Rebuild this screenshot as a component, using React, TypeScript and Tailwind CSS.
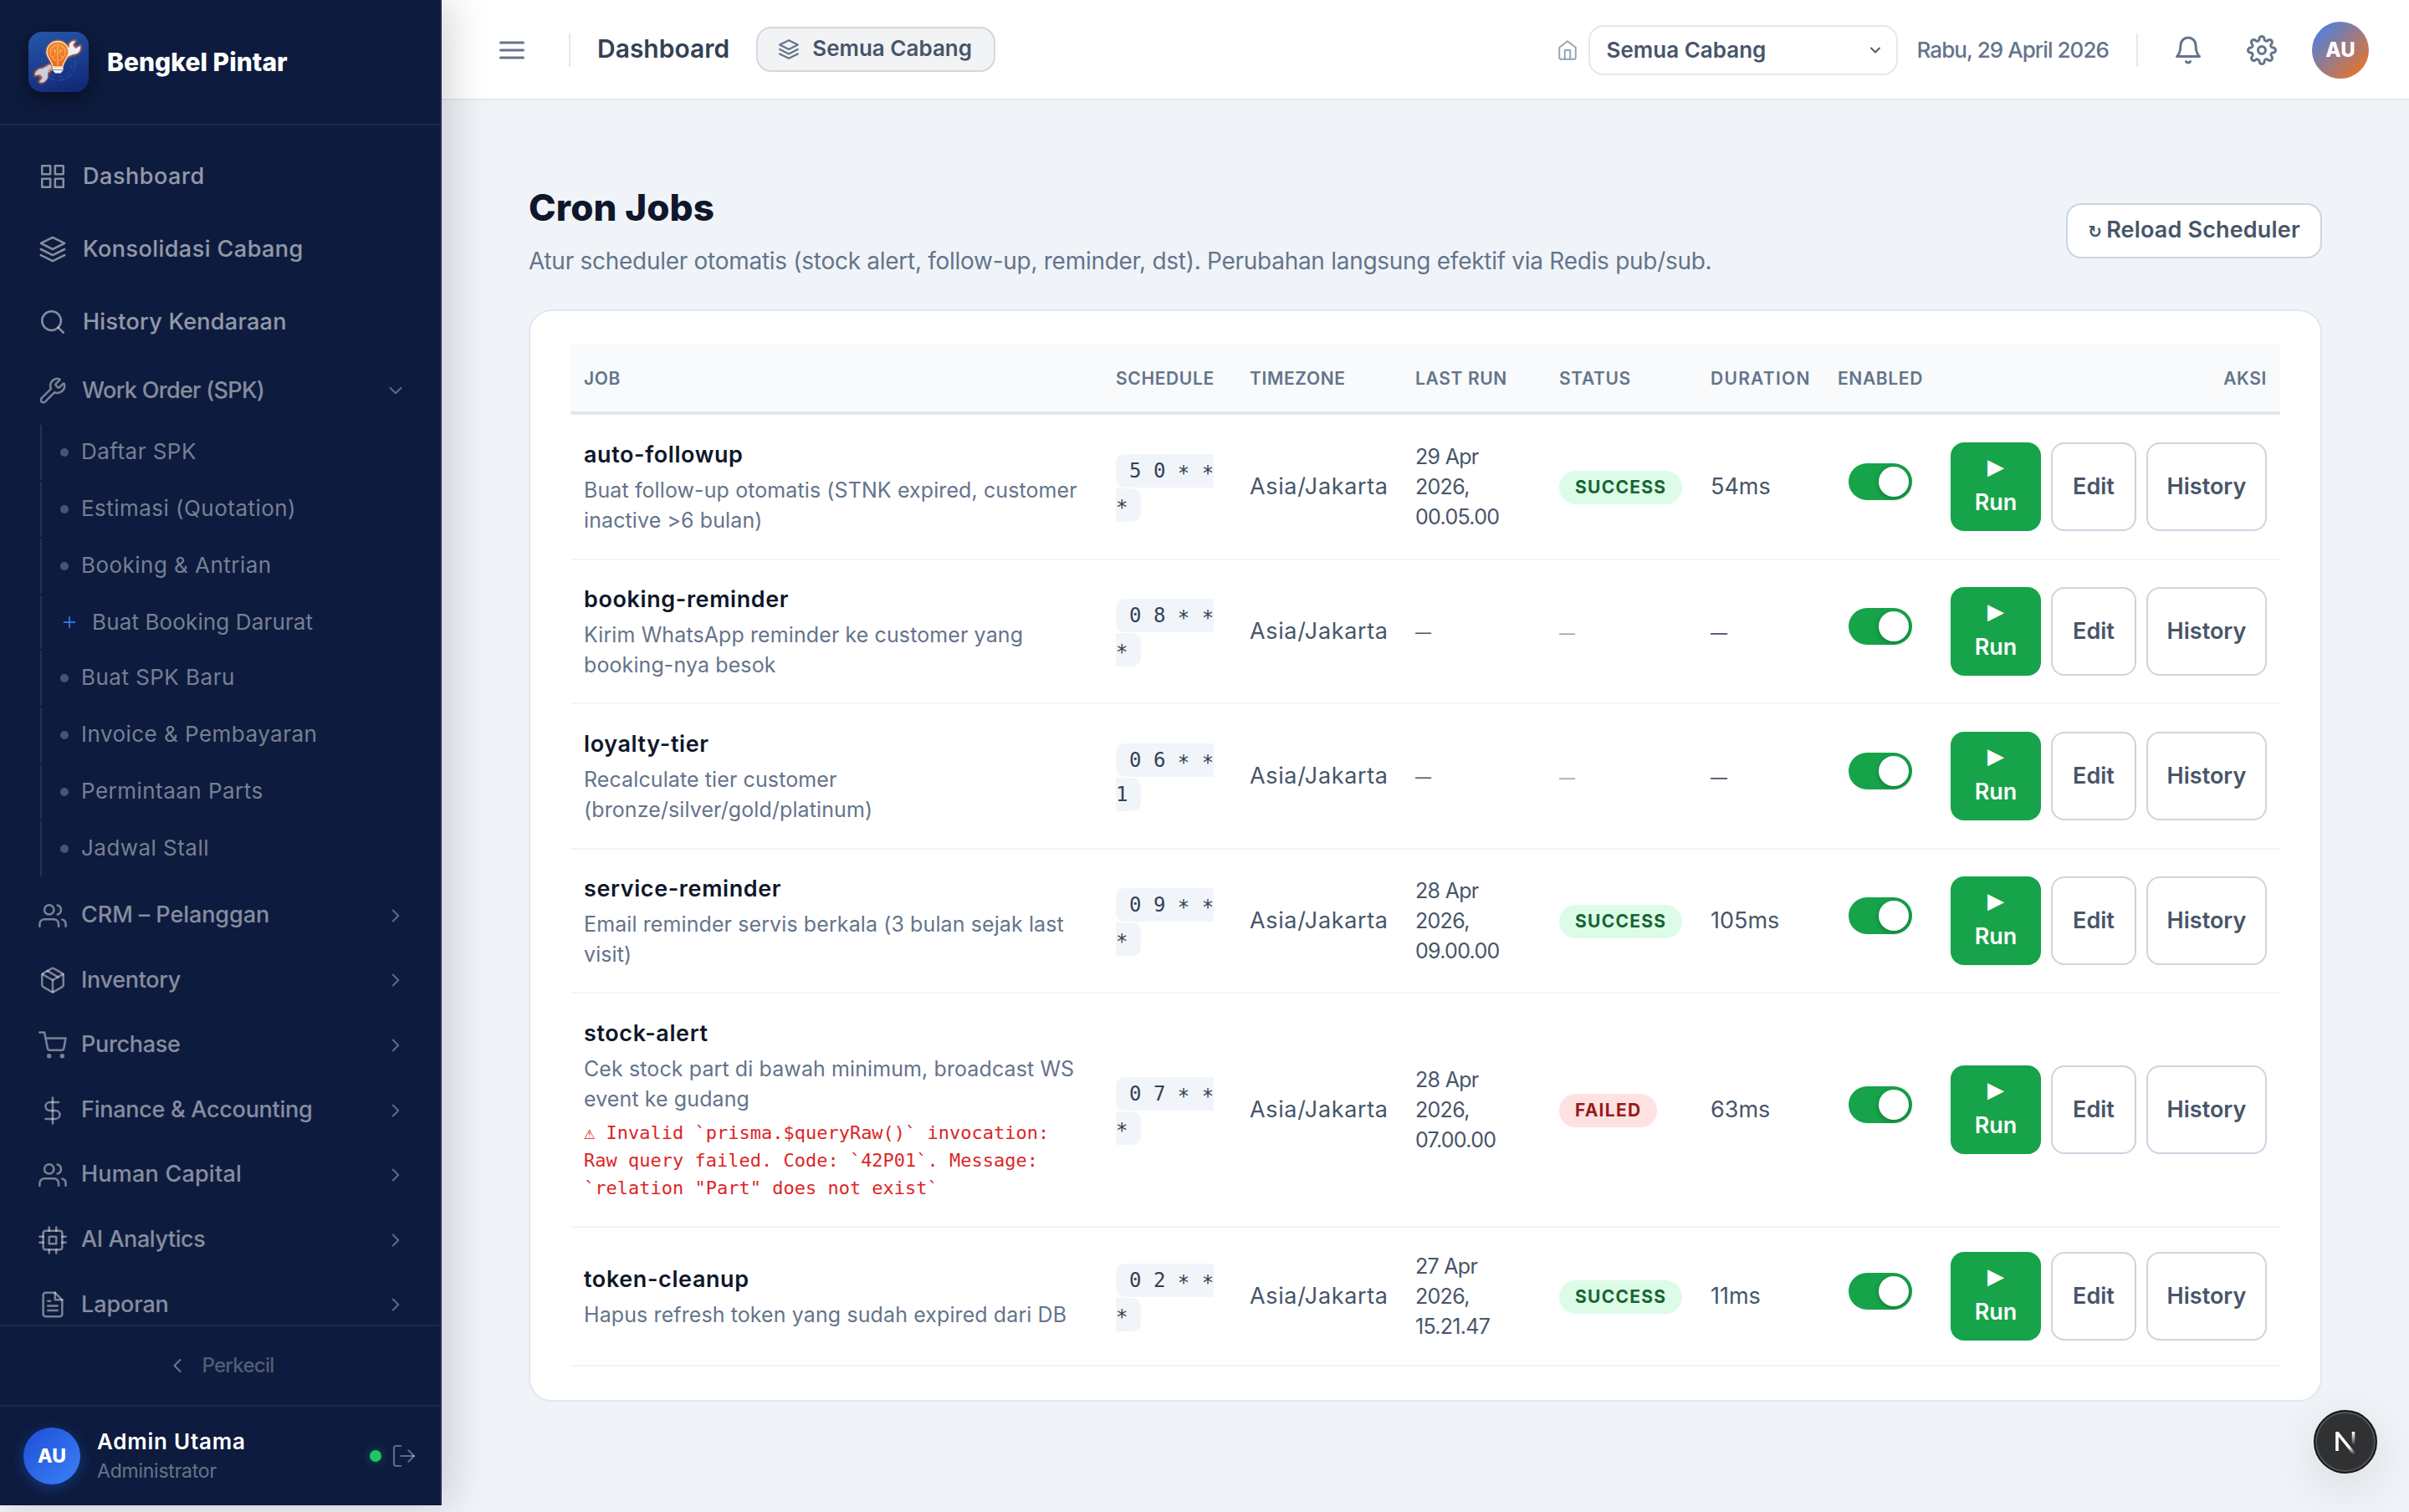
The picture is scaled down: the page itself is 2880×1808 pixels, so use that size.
import React from "react";
import {
  FiBell,
  FiChevronDown,
  FiChevronLeft,
  FiChevronRight,
  FiCpu,
  FiDollarSign,
  FiFileText,
  FiGrid,
  FiHome,
  FiLayers,
  FiLogOut,
  FiMenu,
  FiPackage,
  FiPlus,
  FiSearch,
  FiSettings,
  FiShoppingCart,
  FiUsers,
} from "react-icons/fi";
import { Wrench } from "lucide-react";

interface Job {
  name: string;
  desc: string;
  error?: string;
  schedule: string;
  lastRun?: string;
  status?: "SUCCESS" | "FAILED";
  duration?: string;
  rowHeight: string;
}

const jobs: Job[] = [
  {
    name: "auto-followup",
    desc: "Buat follow-up otomatis (STNK expired, customer inactive >6 bulan)",
    schedule: "5 0 * * *",
    lastRun: "29 Apr\n2026,\n00.05.00",
    status: "SUCCESS",
    duration: "54ms",
    rowHeight: "h-[174px]",
  },
  {
    name: "booking-reminder",
    desc: "Kirim WhatsApp reminder ke customer yang booking-nya besok",
    schedule: "0 8 * * *",
    rowHeight: "h-[172px]",
  },
  {
    name: "loyalty-tier",
    desc: "Recalculate tier customer\n(bronze/silver/gold/platinum)",
    schedule: "0 6 * * 1",
    rowHeight: "h-[174px]",
  },
  {
    name: "service-reminder",
    desc: "Email reminder servis berkala (3 bulan sejak last visit)",
    schedule: "0 9 * * *",
    lastRun: "28 Apr\n2026,\n09.00.00",
    status: "SUCCESS",
    duration: "105ms",
    rowHeight: "h-[172px]",
  },
  {
    name: "stock-alert",
    desc: "Cek stock part di bawah minimum, broadcast WS event ke gudang",
    error:
      '⚠ Invalid `prisma.$queryRaw()` invocation: Raw query failed. Code: `42P01`. Message: `relation "Part" does not exist`',
    schedule: "0 7 * * *",
    lastRun: "28 Apr\n2026,\n07.00.00",
    status: "FAILED",
    duration: "63ms",
    rowHeight: "h-[280px]",
  },
  {
    name: "token-cleanup",
    desc: "Hapus refresh token yang sudah expired dari DB",
    schedule: "0 2 * * *",
    lastRun: "27 Apr\n2026,\n15.21.47",
    status: "SUCCESS",
    duration: "11ms",
    rowHeight: "h-[166px]",
  },
];

const mainLinks = [
  { label: "Dashboard", icon: FiGrid, tracking: "tracking-[0.02em]" },
  { label: "Konsolidasi Cabang", icon: FiLayers, tracking: "tracking-[0.017em]" },
  { label: "History Kendaraan", icon: FiSearch, tracking: "tracking-[0.01em]" },
];

const spkLinks = [
  "Daftar SPK",
  "Estimasi (Quotation)",
  "Booking & Antrian",
  "Buat Booking Darurat",
  "Buat SPK Baru",
  "Invoice & Pembayaran",
  "Permintaan Parts",
  "Jadwal Stall",
];

const groups = [
  { label: "CRM – Pelanggan", icon: FiUsers, tracking: "tracking-[-0.003em]" },
  { label: "Inventory", icon: FiPackage, tracking: "tracking-[-0.012em]" },
  { label: "Purchase", icon: FiShoppingCart, tracking: "tracking-[-0.012em]" },
  { label: "Finance & Accounting", icon: FiDollarSign, tracking: "tracking-[-0.01em]" },
  { label: "Human Capital", icon: FiUsers, tracking: "tracking-[0.008em]" },
  { label: "AI Analytics", icon: FiCpu, tracking: "tracking-[-0.016em]" },
  { label: "Laporan", icon: FiFileText, tracking: "tracking-[-0.004em]" },
];

function Logo() {
  return (
    <svg
      viewBox="0 0 72 72"
      className="h-[72px] w-[72px] shrink-0 rounded-[16px] shadow-[0_8px_24px_rgba(0,0,0,0.45)]"
    >
      <defs>
        <linearGradient id="logoBg" x1="0.3" y1="0" x2="0.6" y2="1">
          <stop offset="0" stopColor="#2453a6" />
          <stop offset="0.5" stopColor="#1c3f8f" />
          <stop offset="1" stopColor="#122a78" />
        </linearGradient>
        <linearGradient id="bulb" x1="0" y1="0" x2="0" y2="1">
          <stop offset="0" stopColor="#f08a2c" />
          <stop offset="1" stopColor="#ea6a1e" />
        </linearGradient>
        <filter id="glow" x="-30%" y="-30%" width="160%" height="160%">
          <feGaussianBlur stdDeviation="1.2" />
        </filter>
      </defs>
      <rect width="72" height="72" fill="url(#logoBg)" />
      <circle cx="36" cy="38" r="20" fill="none" stroke="#2f5db8" strokeWidth="0.8" strokeDasharray="9 3" />
      <circle cx="36" cy="38" r="16" fill="none" stroke="#2f5db8" strokeWidth="0.6" strokeDasharray="6 4" />
      <g fill="none" stroke="#f2722a" strokeWidth="2.4" filter="url(#glow)">
        <path d="M46 21 49 18C48 14 51 11 56 11l-3 5 3 4 6-3c1 6-3 10-9 10l-7 3Z" />
        <path d="M28 44l-5 5c-1 3 0 6-3 9-2 2-5 3-7 2l3-5-3-4-5 1c0-5 4-8 9-8l9-5Z" />
        <circle cx="35" cy="24" r="12.5" />
      </g>
      <path d="M44 22 49 18C48 14 51 11 56 11l-3 5 3 4 6-3c1 6-3 10-9 10l-9 4Z" fill="#eceef5" />
      <path d="M29 45l-6 4c0 4 1 7-3 10-2 2-5 2-7 1l4-5-3-4-6 1c0-5 4-8 9-8l9-5Z" fill="#c9cde0" />
      <path d="m24 47 5-4" stroke="#f2722a" strokeWidth="1.6" />
      <path
        d="M35 11.500c7.500 0 13 5.500 13 12.500 0 7-6 10-7 18H29c-1-8-7-11-7-18 0-7 5.500-12.500 13-12.500Z"
        fill="url(#bulb)"
        stroke="#ffe3c2"
        strokeWidth="1.3"
      />
      <path
        d="M35 14v26M33 16c-3 0-4 2-4 3-3 0-4 4-2 6-2 2 0 5 2 5 0 3 2 4 4 4M37 16c3 0 4 2 4 3 3 0 4 4 2 6 2 2 0 5-2 5 0 3-2 4-4 4M29 22h3v4M41 22h-3v4M30 30l2-2M40 30l-2-2"
        fill="none"
        stroke="#ffd08a"
        strokeWidth="0.9"
      />
      <path d="M29 42.500h12.500v3.500l-3 3.500h-6.500L29 46Z" fill="#f4f5fa" />
      <path d="M29 45.500h12.500" stroke="#7d86a8" strokeWidth="1" />
    </svg>
  );
}

function Sidebar() {
  return (
    <aside className="relative z-10 flex h-[1800px] w-[528px] shrink-0 flex-col border-r-2 border-[#1c2a4c] bg-[#0d1b3e] shadow-[8px_0_48px_rgba(0,0,0,0.18)]">
      <div className="flex h-[150px] shrink-0 items-center gap-[22px] border-b-2 border-white/[0.06] pl-[34px]">
        <Logo />
        <span className="text-[30px] font-extrabold tracking-[0.001em] text-white">Bengkel Pintar</span>
      </div>

      <nav className="min-h-0 flex-1 overflow-hidden pt-[17px]">
        {mainLinks.map(({ label, icon: Icon, tracking }) => (
          <a key={label} className="flex h-[87px] items-center gap-[19px] pl-[46px]">
            <Icon size={34} strokeWidth={1.8} className="text-white/50" />
            <span className={`pt-px text-[27px] font-medium text-white/55 ${tracking}`}>{label}</span>
          </a>
        ))}

        <div className="flex h-[78px] items-center gap-[18px] pr-[40px] pl-[46px]">
          <Wrench size={34} strokeWidth={1.8} className="text-white/45" />
          <span className="flex-1 text-[27px] font-medium tracking-[-0.026em] text-white/50">Work Order (SPK)</span>
          <FiChevronDown size={26} strokeWidth={1.8} className="text-white/35" />
        </div>

        <div className="mt-[2px] mb-[8px] ml-[48px] flex flex-col gap-[2px]">
          {spkLinks.map((label) =>
            label === "Buat Booking Darurat" ? (
              <a key={label} className="flex h-[64px] items-center gap-[16px] border-l-2 border-white/10 pl-[22px]">
                <FiPlus size={22} strokeWidth={2} className="text-[#2f74e0]" />
                <span className="pb-[2px] text-[26px] tracking-[0.005em] text-white/45">{label}</span>
              </a>
            ) : (
              <a key={label} className="flex h-[66px] items-center gap-[15px] border-l-2 border-white/10 pl-[22px]">
                <span className="h-[10px] w-[10px] rounded-full bg-white/25" />
                <span className="pb-[4px] text-[26px] tracking-[0.018em] text-white/45">{label}</span>
              </a>
            ),
          )}
        </div>

        {groups.map(({ label, icon: Icon, tracking }) => (
          <div key={label} className="flex h-[77.6px] items-center gap-[17px] pr-[40px] pl-[46px]">
            <Icon size={34} strokeWidth={1.8} className="text-white/45" />
            <span className={`flex-1 pb-px text-[27px] font-medium text-white/50 ${tracking}`}>{label}</span>
            <FiChevronRight size={26} strokeWidth={1.8} className="text-white/35" />
          </div>
        ))}
      </nav>

      <button className="flex h-[96px] shrink-0 items-center justify-center gap-[15px] border-t-2 border-white/[0.06] text-white/30">
        <FiChevronLeft size={28} strokeWidth={1.8} className="text-white/40" />
        <span className="text-[24px] font-medium tracking-[-0.03em]">Perkecil</span>
      </button>

      <div className="flex h-[120px] shrink-0 items-center border-t-2 border-white/[0.06] pr-[27px] pl-[28px]">
        <div className="flex h-[68px] w-[68px] items-center justify-center rounded-full bg-linear-to-br/srgb from-[#1d4ed8] to-[#3b82f6] text-[23px] font-extrabold text-white shadow-[0_4px_16px_rgba(37,99,235,0.4)]">
          AU
        </div>
        <div className="ml-[20px] flex flex-1 flex-col pb-[2px]">
          <span className="text-[26px] leading-[37px] font-semibold tracking-[0.03em] text-white">Admin Utama</span>
          <span className="text-[23px] leading-[34px] tracking-[-0.01em] text-white/40">Administrator</span>
        </div>
        <span className="mr-[11px] h-[14px] w-[14px] rounded-full bg-[#22c55e] shadow-[0_0_12px_rgba(34,197,94,0.4)]" />
        <FiLogOut size={32} strokeWidth={1.6} className="text-white/35" />
      </div>
    </aside>
  );
}

function Topbar() {
  return (
    <header className="flex h-[120px] shrink-0 items-center justify-between border-b-2 border-[#e2e8f0] bg-white pt-px pr-[48px] pl-[66px]">
      <div className="flex items-center">
        <FiMenu size={36} className="text-[#64748b]" />
        <div className="mr-[32px] ml-[50px] h-[40px] w-[2px] bg-[#e2e8f0]" />
        <span className="pb-[2px] text-[30px] font-semibold text-[#334155]">Dashboard</span>
        <div className="mb-[2px] ml-[32px] flex h-[54px] w-[286px] items-center gap-[15px] rounded-[18px] border-2 border-[#d3d8e0] bg-[#f2f3f5] pl-[24px]">
          <FiLayers size={26} className="text-[#64748b]" />
          <span className="pb-[2px] text-[26px] font-semibold whitespace-nowrap text-[#475569]">Semua Cabang</span>
        </div>
      </div>

      <div className="flex items-center">
        <FiHome size={26} strokeWidth={1.8} className="text-[#94a3b8]" />
        <div className="ml-[12px] flex h-[60px] w-[370px] items-center justify-between rounded-[18px] border-2 border-[#e2e8f0] bg-white pr-[15px] pl-[20px]">
          <span className="text-[26px] font-semibold text-[#475569]">Semua Cabang</span>
          <FiChevronDown size={20} strokeWidth={2.2} className="text-[#475569]" />
        </div>
        <span className="ml-[23px] text-[26px] font-medium tracking-[-0.036em] whitespace-nowrap text-[#64748b]">
          Rabu, 29 April 2026
        </span>
        <div className="mr-[42px] ml-[33px] h-[40px] w-[2px] bg-[#e2e8f0]" />
        <FiBell size={36} className="text-[#64748b]" />
        <FiSettings size={36} className="ml-[52px] text-[#64748b]" />
        <div className="ml-[42px] flex h-[68px] w-[68px] items-center justify-center rounded-full bg-linear-to-br/srgb from-[#3b82f6] to-[#f97316] text-[24px] font-extrabold text-white">
          AU
        </div>
      </div>
    </header>
  );
}

function StatusBadge({ status }: { status?: Job["status"] }) {
  if (!status) return <span className="text-[19px] text-[#94a3b8]">—</span>;
  const tone = status === "SUCCESS" ? "bg-[#dcfce7] text-[#166534]" : "bg-[#fee2e2] text-[#991b1b]";
  return (
    <span
      className={`inline-flex h-[40px] items-center rounded-full px-[19px] align-middle text-[21px] font-bold tracking-[0.06em] ${tone}`}
    >
      {status}
    </span>
  );
}

function Schedule({ value }: { value: string }) {
  return (
    <code className="rounded-[10px] bg-[#f1f5f9] px-[16px] py-[6px] font-['DejaVu_Sans_Mono',monospace] text-[24px] text-[#334155]">
      {value.split(" ").map((part, i) => (
        <React.Fragment key={i}>
          {i > 0 && " "}
          {/* the asterisk sits high in this face, bring it down to the digits */}
          {part === "*" ? <span className="relative top-[3px]">*</span> : part}
        </React.Fragment>
      ))}
    </code>
  );
}

function JobRow({ job }: { job: Job }) {
  return (
    <tr className={`${job.rowHeight} text-[27px] text-[#475569] [&>td]:border-b-2 [&>td]:border-[#f1f5f9] [&>td]:px-4`}>
      <td>
        <div className="pb-[3px]">
          <div className="pt-px leading-[42px] font-semibold tracking-[0.022em] text-[#0f172a]">{job.name}</div>
          <div className="mt-[3px] text-[25px] leading-[36px] tracking-[0.004em] whitespace-pre-line text-[#64748b]">
            {job.desc}
          </div>
          {job.error && (
            <div className="mt-[6px] font-['DejaVu_Sans_Mono',monospace] text-[22px] leading-[33px] text-[#dc2626]">
              {job.error}
            </div>
          )}
        </div>
      </td>
      <td className="pt-px leading-[40px]">
        <Schedule value={job.schedule} />
      </td>
      <td className="tracking-[0.024em]">Asia/Jakarta</td>
      <td className="text-[25px] leading-[36px] tracking-[-0.028em] whitespace-pre-line">
        {job.lastRun ?? <span className="text-[19px]">—</span>}
      </td>
      <td>
        <StatusBadge status={job.status} />
      </td>
      <td>{job.duration ?? <span className="text-[20px]">—</span>}</td>
      <td>
        <div className="flex justify-center pr-px pb-3">
          <div className="flex h-[44px] w-[76px] items-center justify-end rounded-full bg-[#16a34a] pr-1">
            <div className="h-[36px] w-[36px] rounded-full bg-white shadow-[0_2px_6px_rgba(0,0,0,0.25)]" />
          </div>
        </div>
      </td>
      <td>
        <div className="flex h-[106px] justify-end gap-3 font-semibold">
          <button className="w-[108px] rounded-[16px] bg-[#16a34a] px-6 pb-[2px] leading-[40px] text-white">
            <span className="inline-block -translate-y-[3px] font-['DejaVu_Sans',sans-serif] text-[26px]">▶</span> Run
          </button>
          <button className="w-[102px] rounded-[16px] border-2 border-[#cbd5e1] bg-white">Edit</button>
          <button className="w-[144px] rounded-[16px] border-2 border-[#cbd5e1] bg-white">History</button>
        </div>
      </td>
    </tr>
  );
}

function JobsTable() {
  return (
    <table className="w-full table-fixed border-separate border-spacing-0">
      <colgroup>
        <col className="w-[636px]" />
        <col className="w-[160px]" />
        <col className="w-[198px]" />
        <col className="w-[172px]" />
        <col className="w-[181px]" />
        <col className="w-[152px]" />
        <col className="w-[135px]" />
        <col className="w-[410px]" />
      </colgroup>
      <thead>
        <tr className="h-[84px] text-left text-[21px] tracking-[0.03em] text-[#64748b] [&>th]:border-b-4 [&>th]:border-[#e2e8f0] [&>th]:bg-[#f8fafc] [&>th]:px-4 [&>th]:pt-[2px] [&>th]:font-semibold [&>th]:whitespace-nowrap">
          <th>JOB</th>
          <th>SCHEDULE</th>
          <th>TIMEZONE</th>
          <th>LAST RUN</th>
          <th>STATUS</th>
          <th className="tracking-[0.06em]">DURATION</th>
          <th>ENABLED</th>
          <th className="text-right">AKSI</th>
        </tr>
      </thead>
      <tbody>
        {jobs.map((job) => (
          <JobRow key={job.name} job={job} />
        ))}
      </tbody>
    </table>
  );
}

function DevBadge() {
  return (
    <div className="absolute right-[38px] bottom-[46px] z-20 flex h-[76px] w-[76px] items-center justify-center rounded-full border-2 border-[#171717] bg-[#303133] shadow-[inset_0_0_0_2px_#525252,0_16px_64px_rgba(0,0,0,0.12)]">
      <svg width="28" height="32" viewBox="0 0 28 32" fill="none">
        <defs>
          <linearGradient id="nDiag" x1="14" y1="16" x2="25" y2="31" gradientUnits="userSpaceOnUse">
            <stop offset="0.4" stopColor="#fff" />
            <stop offset="1" stopColor="#fff" stopOpacity="0" />
          </linearGradient>
          <linearGradient id="nStem" x1="0" y1="5" x2="0" y2="20" gradientUnits="userSpaceOnUse">
            <stop offset="0" stopColor="#fff" />
            <stop offset="1" stopColor="#fff" stopOpacity="0" />
          </linearGradient>
        </defs>
        <path d="M4 27V4M4 5L25 31" stroke="url(#nDiag)" strokeWidth="3.600" />
        <path d="M23.500 4v17" stroke="url(#nStem)" strokeWidth="3.600" />
      </svg>
    </div>
  );
}

export default function App() {
  return (
    <div className="relative flex h-[1808px] w-[2880px] overflow-hidden bg-[#f0f4f9] font-['Inter',sans-serif]">
      <Sidebar />
      <div className="flex min-w-0 flex-1 flex-col">
        <Topbar />
        <main className="px-[104px] pt-[100px]">
          <div className="mb-[37px] flex items-center justify-between">
            <div>
              <h1 className="text-[44px] leading-[56px] font-extrabold tracking-[0.002em] text-[#0f172a]">Cron Jobs</h1>
              <p className="mt-[15px] text-[28px] leading-[42px] tracking-[-0.01em] text-[#64748b]">
                Atur scheduler otomatis (stock alert, follow-up, reminder, dst). Perubahan langsung efektif via Redis
                pub/sub.
              </p>
            </div>
            <button className="mb-[2px] flex h-[66px] w-[306px] items-center justify-center gap-[5px] rounded-[18px] border-2 border-[#cbd5e1] bg-white text-[27px] font-semibold tracking-[0.006em] text-[#475569]">
              <span className="pt-[2px] font-['DejaVu_Sans',sans-serif] text-[20px] font-bold">↻</span>
              Reload Scheduler
            </button>
          </div>

          <section className="rounded-[28px] border-2 border-[#e2e8f0] bg-white px-[48px] py-[40px]">
            <JobsTable />
          </section>
        </main>
      </div>
      <DevBadge />
    </div>
  );
}
